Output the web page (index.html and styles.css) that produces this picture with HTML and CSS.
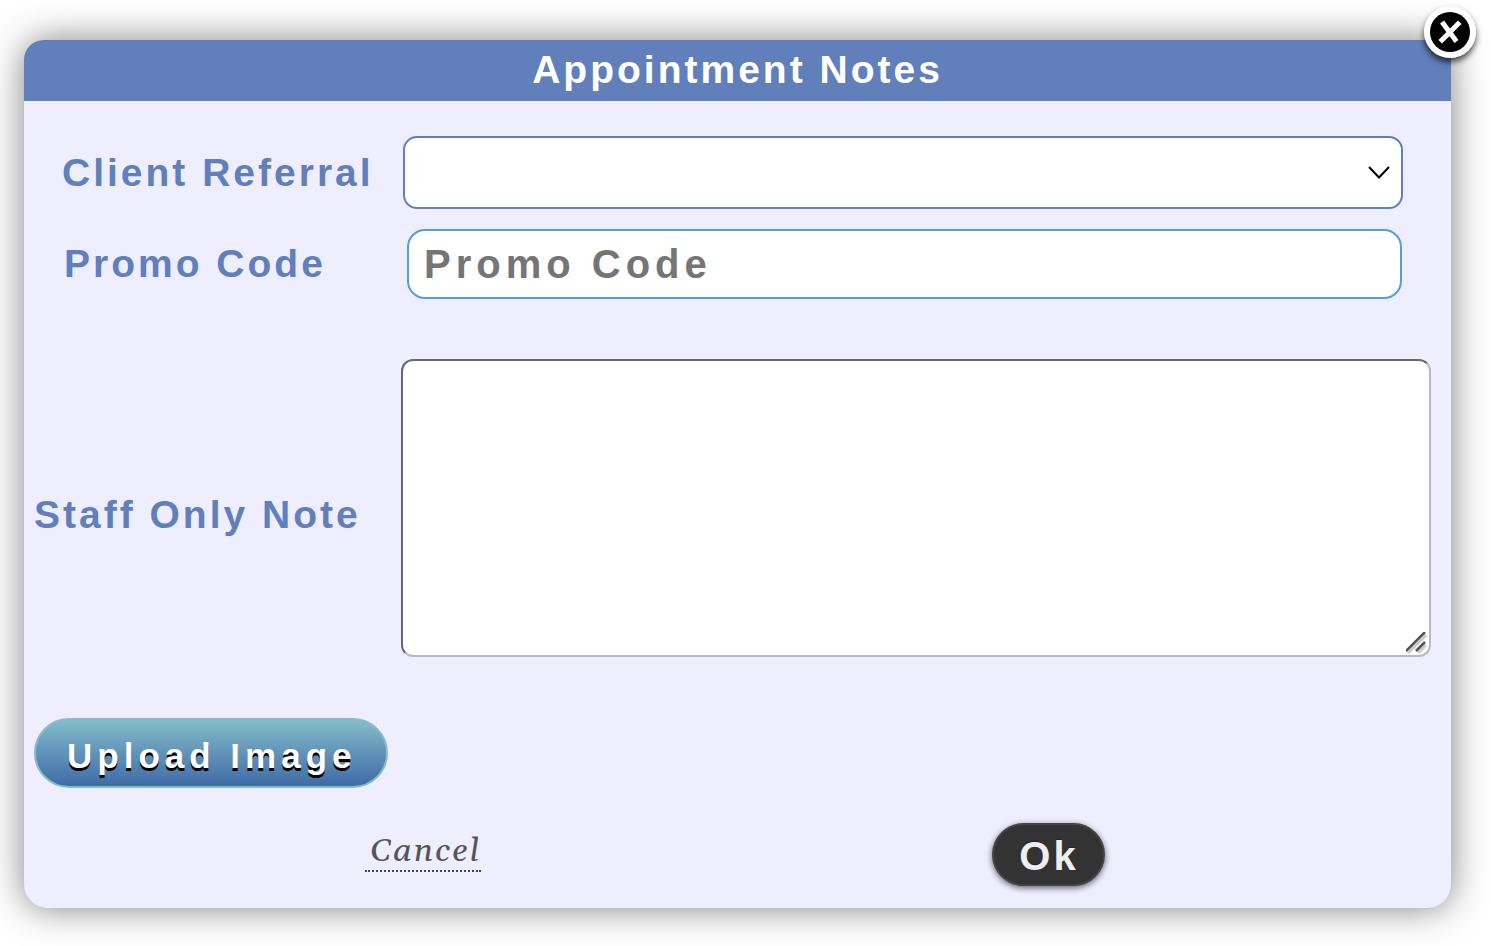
FILE: index.html
```html
<!DOCTYPE html>
<html lang="en">
<head>
<meta charset="utf-8">
<title>Appointment Notes</title>
<link rel="stylesheet" href="styles.css">
</head>
<body>
<main class="dialog" role="dialog" aria-labelledby="dialog-title">
  <h1 class="dialog-title" id="dialog-title">Appointment Notes</h1>
  <button class="close" type="button" aria-label="Close">
    <svg viewBox="0 0 52 52" width="52" height="52" aria-hidden="true">
      <circle cx="26" cy="26" r="26" fill="#fff"/>
      <circle cx="26" cy="26" r="20" fill="#000"/>
      <path d="M19.500 18L31 33.500M34 18L18 34" stroke="#fff" stroke-width="5" stroke-linecap="square"/>
    </svg>
  </button>
  <form class="form">
    <div class="row row-referral">
      <label class="label" for="referral">Client Referral</label>
      <div class="select-wrap">
        <select class="control select" id="referral"><option></option></select>
        <svg class="chevron" viewBox="0 0 22 14" width="22" height="14" aria-hidden="true"><path d="M1 1L11 11.500L21 1" fill="none" stroke="#000" stroke-width="2"/></svg>
      </div>
    </div>
    <div class="row row-promo">
      <label class="label" for="promo">Promo Code</label>
      <input class="control input" id="promo" type="text" placeholder="Promo Code">
    </div>
    <div class="row row-note">
      <label class="label" for="note">Staff Only Note</label>
      <div class="note-wrap">
        <textarea class="control textarea" id="note"></textarea>
        <svg class="grip" viewBox="0 0 22 22" width="22" height="22" aria-hidden="true"><path d="M2 21L20 3M12 21L20 13" stroke="#ccc" stroke-width="3"/><path d="M0 19L19 0M10 19L19 10" stroke="#555" stroke-width="2.500"/></svg>
      </div>
    </div>
    <button class="upload" type="button">Upload Image</button>
    <div class="actions">
      <div class="action"><a class="cancel" href="#">Cancel</a></div>
      <div class="action"><button class="ok" type="button">Ok</button></div>
    </div>
  </form>
</main>
</body>
</html>
```
FILE: styles.css
```css
* {
  box-sizing: border-box;
}

body {
  margin: 0;
  padding: 40px 40px 38px 24px;
  background: #fff;
  color: #607fbb;
  font: bold 39px/46px "Liberation Sans", Arial, sans-serif;
  letter-spacing: 3px;
}

.dialog {
  position: relative;
  border-radius: 24px;
  background: #efeefe;
  box-shadow: 0 0 36px rgba(0, 0, 0, 0.5);
}

.dialog-title {
  margin: 0;
  padding: 7px 0 8px;
  border-radius: 20px 0 0 0;
  background: #607fbb;
  color: #fff;
  font: inherit;
  text-align: center;
}

.close {
  position: absolute;
  top: -34px;
  right: -25px;
  width: 52px;
  height: 52px;
  padding: 0;
  border: 0;
  border-radius: 50%;
  background: none;
  box-shadow: 0 4px 6px rgba(0, 0, 0, 0.7);
}

.close svg {
  display: block;
}

.form {
  display: flex;
  flex-direction: column;
  padding: 35px 20px 22px 10px;
}

.row {
  display: flex;
  align-items: center;
}

.row-referral {
  padding: 0 28px;
  margin-bottom: 20px;
}

.row-promo {
  padding: 0 29px 0 30px;
  margin-bottom: 60px;
}

.row-note {
  margin-bottom: 61px;
}

.label {
  flex: none;
  white-space: nowrap;
}

.row-referral .label {
  width: 341px;
}

.row-promo .label {
  width: 343px;
}

.row-note .label {
  width: 367px;
  padding-top: 14px;
}

.control {
  display: block;
  width: 100%;
  background: #fff;
  font: inherit;
  outline: 0;
}

.select-wrap,
.note-wrap {
  position: relative;
  flex: 1;
}

.select {
  height: 73px;
  padding: 0 44px 0 16px;
  border: 2px solid #607fbb;
  border-radius: 14px;
  appearance: none;
}

.chevron {
  position: absolute;
  top: 30px;
  right: 13px;
  pointer-events: none;
}

.input {
  flex: 1;
  min-width: 0;
  height: 70px;
  padding: 0 15px;
  border: 2px solid #579ddb;
  border-radius: 18px;
  font-size: 40px;
  letter-spacing: 5px;
}

.input::placeholder {
  color: #757575;
  opacity: 1;
}

.textarea {
  height: 298px;
  padding: 12px;
  border: 2px solid;
  border-color: #6a6a6e #bbb #bbb #6a6a6e;
  border-radius: 12px;
  resize: none;
}

.grip {
  position: absolute;
  right: 3px;
  bottom: 3px;
  pointer-events: none;
}

.upload {
  align-self: flex-start;
  height: 70px;
  margin-bottom: 35px;
  padding: 6px 30px 0 31px;
  border: 2px solid #84bccb;
  border-radius: 35px;
  background: #84bccb linear-gradient(#84bccb, #3f6ba6) no-repeat;
  color: #fff;
  font: bold 35px/42px "Liberation Sans", Arial, sans-serif;
  letter-spacing: 5px;
  text-shadow: 0 3px 0 #000;
}

.actions {
  display: grid;
  grid-template-columns: 778fr 473fr;
  padding-right: 146px;
}

.action {
  text-align: center;
}

.cancel {
  display: inline-block;
  margin-top: 10px;
  padding: 0 0 0 5px;
  border-bottom: 2px dotted #444;
  color: #555;
  font: italic 33px/37px Georgia, Gelasio, "DejaVu Serif", serif;
  letter-spacing: 2px;
  text-decoration: none;
}

.ok {
  height: 63px;
  padding: 2px 24px 0 25px;
  border: 2px solid #444;
  border-radius: 32px;
  background: #333;
  color: #eee;
  font: inherit;
  font-size: 40px;
  letter-spacing: 3px;
  text-shadow: 0 -1px 1px #222;
  box-shadow: 0 2px 6px rgba(0, 0, 0, 0.6);
}
```
